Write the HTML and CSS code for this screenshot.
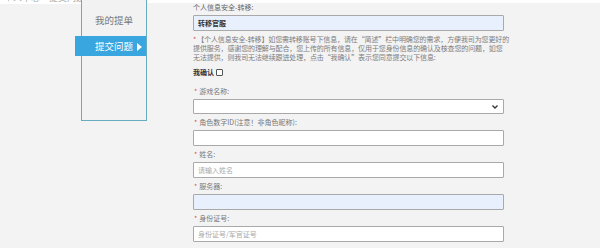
FILE: index.html
```html
<!DOCTYPE html>
<html lang="zh-CN">
<head>
    <meta charset="UTF-8">
    <title>提交问题</title>
    <link rel="stylesheet" href="styles.css">
</head>
<body>
    <div class="page">
        <div class="crumb-col">
            <div class="crumb"><span>个人中心 &gt; 提交问题</span></div>
        </div>

        <!-- left menu -->
        <div class="sidebar">
            <div class="menu-item">我的提单</div>
            <div class="menu-item active">提交问题<span class="arrow"></span></div>
        </div>

        <div class="content">
            <div class="strip"></div>
            <div class="form">
                <div class="label plain">个人信息安全-转移:</div>
                <div class="input filled"><b>转移官服</b></div>

                <div class="note">
                    <span class="line"><span class="star">*</span>【个人信息安全-转移】如您需转移账号下信息，请在“简述”栏中明确您的需求，方便我司为您更好的</span>
                    <span class="line">提供服务，感谢您的理解与配合，您上传的所有信息，仅用于您身份信息的确认及核查您的问题，如您</span>
                    <span class="line">无法提供，则我司无法继续跟进处理，点击“我确认”表示您同意提交以下信息:</span>
                </div>

                <div class="confirm">我确认 <span class="check"></span></div>

                <div class="group first">
                    <div class="label"><span class="star">*</span>游戏名称:</div>
                    <div class="input select">
                        <svg width="6" height="4" viewBox="0 0 6 4"><path d="M0.5 0.5 L3 3 L5.5 0.5" fill="none" stroke="#333" stroke-width="1.3"/></svg>
                    </div>
                </div>
                <div class="group">
                    <div class="label"><span class="star">*</span>角色数字ID(注意！非角色昵称):</div>
                    <div class="input"></div>
                </div>
                <div class="group">
                    <div class="label"><span class="star">*</span>姓名:</div>
                    <div class="input"><span class="ph">请输入姓名</span></div>
                </div>
                <div class="group">
                    <div class="label"><span class="star">*</span>服务器:</div>
                    <div class="input filled"></div>
                </div>
                <div class="group">
                    <div class="label"><span class="star">*</span>身份证号:</div>
                    <div class="input"><span class="ph">身份证号/军官证号</span></div>
                </div>
            </div>
        </div>
    </div>
</body>
</html>
```

FILE: styles.css
```css
body {
    margin: 0;
    background-color: #f3f3f4;
    font-family: "Noto Sans CJK SC", "Noto Sans", sans-serif;
    overflow: hidden;
}
.page {
    display: flex;
    align-items: flex-start;
}
.crumb-col {
    width: 81px;
    flex: none;
}
.crumb {
    height: 4px;
    overflow: hidden;
    background-color: #fff;
}
.crumb span {
    display: block;
    margin-top: -7px;
    padding-left: 4px;
    font-size: 9px;
    line-height: 10px;
    color: #aaa;
    white-space: nowrap;
}
.sidebar {
    width: 64px;
    height: 120px;
    flex: none;
    background-color: #f2f2f3;
    border: 1px solid #68acc0;
    border-top: none;
}
.menu-item {
    text-align: center;
    font-size: 9.5px;
    line-height: 14px;
    color: #777;
    padding-top: 13px;
}
.menu-item.active {
    margin: 9px 0 0 -7px;
    width: 71px;
    padding: 0 0 0 20px;
    box-sizing: border-box;
    text-align: left;
    height: 20px;
    line-height: 20px;
    background-color: #3aa6e0;
    color: #fff;
    white-space: nowrap;
}
.arrow {
    display: inline-block;
    width: 0;
    height: 0;
    margin-left: 4px;
    border-left: 5px solid #fff;
    border-top: 4px solid transparent;
    border-bottom: 4px solid transparent;
    vertical-align: -1px;
}
.content {
    flex: 1;
}
.strip {
    height: 3px;
    background-color: #fff;
}
.form {
    padding-left: 46px;
    width: 311px;
}
.label {
    font-size: 7px;
    line-height: 11px;
    color: #777;
    white-space: nowrap;
    padding-left: 1px;
}
.label.plain {
    line-height: 9px;
    color: #666;
    padding-left: 0;
}
.star {
    color: #d9534f;
    margin-right: 2px;
}
.input {
    height: 16px;
    box-sizing: border-box;
    border: 1px solid #a9a9a9;
    border-radius: 1px;
    background-color: #fff;
    margin-top: 2px;
    padding-left: 4px;
    font-size: 7px;
    line-height: 14px;
    color: #333;
    display: flex;
    align-items: center;
}
.form > .input {
    margin-top: 3px;
}
.input.filled {
    background-color: #e8f0fe;
}
.input b {
    font-weight: 700;
    color: #333;
}
.input.select {
    height: 15px;
    justify-content: flex-end;
    padding-right: 5px;
}
.ph {
    color: #aaa;
}
.note {
    margin-top: 4px;
    font-size: 7px;
    line-height: 9px;
    letter-spacing: -0.12px;
    color: #7d7d7d;
}
.note .line {
    display: block;
    white-space: nowrap;
}
.note .star {
    margin-right: 1px;
}
.confirm {
    margin-top: 5px;
    font-size: 7px;
    line-height: 10px;
    font-weight: 700;
    color: #333;
    display: flex;
    align-items: center;
    gap: 2px;
}
.check {
    width: 5px;
    height: 5px;
    border: 1px solid #555;
    border-radius: 1px;
    background-color: #fff;
}
.group {
    margin-top: 3px;
}
.group.first {
    margin-top: 9px;
}
```
